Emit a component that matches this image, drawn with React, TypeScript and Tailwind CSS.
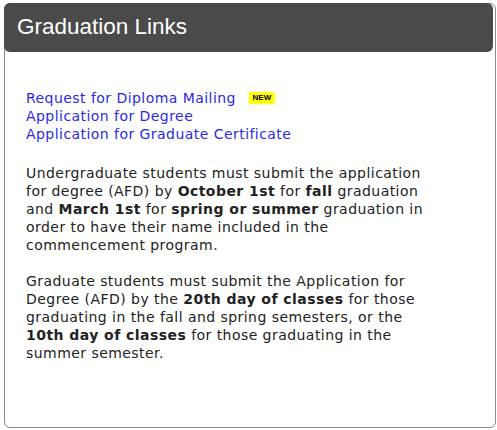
export default function App() {
  return (
    <div className="w-[497px] h-[430px] bg-white pt-[3px] pl-[4px] pr-[1px] pb-[2px]">
      <div className="h-full flex flex-col border border-[#8a8a8a] rounded-[6px] bg-white">
        {/* Header */}
        <div className="h-[49px] mr-[2px] -mt-px -ml-px bg-[#4a4a4a] rounded-[6px] flex items-center pl-[13px]">
          <h2 className="text-white text-[22.5px] font-['Liberation_Sans',Arial,sans-serif] pb-[2px]">
            Graduation Links
          </h2>
        </div>

        {/* Body */}
        <div className="pt-[37px] pl-[21px] w-[440px] text-[14px] tracking-[0.45px] leading-[18px] text-[#222] font-['DejaVu_Sans',Verdana,sans-serif]">
          <div className="flex flex-col text-[#2a2ae6]">
            <div className="flex items-center">
              <a href="#">Request for Diploma Mailing</a>
              <span className="relative ml-[12px] inline-flex items-center justify-center w-[28px] h-[14px]">
                <svg viewBox="0 0 28 14" className="absolute inset-0 w-[28px] h-[14px]">
                  <polygon
                    fill="#ffff00"
                    points="0,2 3,0 5,2 8,0 10,2 13,0 15,2 18,0 20,2 23,0 25,2 28,1 26,5 28,7 26,9 28,13 25,12 23,14 20,12 18,14 15,12 13,14 10,12 8,14 5,12 3,14 0,12 2,9 0,7 2,5"
                  />
                </svg>
                <span className="relative text-black text-[8px] tracking-normal leading-none font-bold font-['Liberation_Sans',Arial,sans-serif]">
                  NEW
                </span>
              </span>
            </div>
            <a href="#">Application for Degree</a>
            <a href="#">Application for Graduate Certificate</a>
          </div>

          <p className="mt-[21px]">
            Undergraduate students must submit the application for degree (AFD) by{" "}
            <b>October 1st</b> for <b>fall</b> graduation and <b>March 1st</b> for{" "}
            <b>spring or summer</b> graduation in order to have their name included in the
            commencement program.
          </p>

          <p className="mt-[18px]">
            Graduate students must submit the Application for Degree (AFD) by the{" "}
            <b>20th day of classes</b> for those graduating in the fall and spring semesters, or
            the <b>10th day of classes</b> for those graduating in the summer semester.
          </p>
        </div>
      </div>
    </div>
  );
}
